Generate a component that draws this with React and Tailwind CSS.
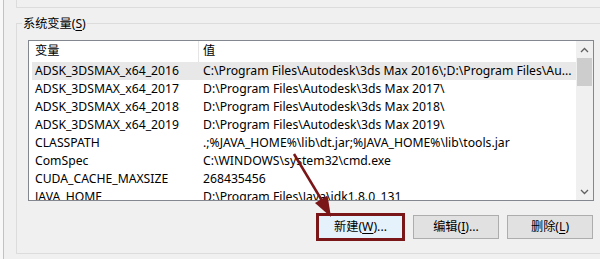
const rows = [
  ["ADSK_3DSMAX_x64_2016", "C:\\Program Files\\Autodesk\\3ds Max 2016\\;D:\\Program Files\\Au...", true],
  ["ADSK_3DSMAX_x64_2017", "D:\\Program Files\\Autodesk\\3ds Max 2017\\"],
  ["ADSK_3DSMAX_x64_2018", "D:\\Program Files\\Autodesk\\3ds Max 2018\\"],
  ["ADSK_3DSMAX_x64_2019", "D:\\Program Files\\Autodesk\\3ds Max 2019\\"],
  ["CLASSPATH", ".;%JAVA_HOME%\\lib\\dt.jar;%JAVA_HOME%\\lib\\tools.jar"],
  ["ComSpec", "C:\\WINDOWS\\system32\\cmd.exe"],
  ["CUDA_CACHE_MAXSIZE", "268435456"],
  ["JAVA_HOME", "D:\\Program Files\\Java\\jdk1.8.0_131"],
];

function Chevron({ up }) {
  return (
    <svg width="9" height="6" viewBox="0 0 9 6" className="block">
      <path
        d={up ? "M1 5 L4.5 1.5 L8 5" : "M1 1 L4.5 4.5 L8 1"}
        fill="none"
        stroke="#606060"
        strokeWidth="1.3"
      />
    </svg>
  );
}

export default function App() {
  return (
    <div className="relative flex h-[259px] w-[600px] overflow-hidden bg-[#f0f0f0] font-['Noto_Sans','Noto_Sans_CJK_SC',sans-serif] text-[12.2px] text-black">
      <div className="w-[3px] shrink-0 bg-[#f8f8f8]" />
      <div className="w-px shrink-0 bg-[#a8c8e6]" />
      <div className="flex flex-1 flex-col">
        <div className="ml-[12px] h-[8px] shrink-0 border-b border-l border-[#dcdcdc]" />
        <div className="-mr-[4px] ml-[12px] mt-[15px] h-[231px] shrink-0 border border-[#dcdcdc] pl-[11px]">
          <div className="-ml-[6px] -mt-[8px] w-fit bg-[#f0f0f0] px-px leading-[16px]">
            系统变量(<u className="underline-offset-2">S</u>)
          </div>
          <div className="mt-[8px] flex h-[161px] w-[566px] border border-[#828790] bg-white">
            <div className="flex min-w-0 flex-1 flex-col overflow-hidden">
              <div className="flex h-[21px] shrink-0 items-center">
                <div className="flex h-full w-[170px] shrink-0 items-center border-r border-[#e5e5e5] pl-[6px]">
                  变量
                </div>
                <div className="pl-[4px]">值</div>
              </div>
              {rows.map(([name, value, sel]) => (
                <div
                  key={name}
                  className={`ml-[3px] flex h-[18px] shrink-0 items-center whitespace-nowrap leading-[18px] ${sel ? "bg-[#e8e8e8]" : ""}`}
                >
                  <div className="w-[167px] shrink-0 pl-[3px]">{name}</div>
                  <div className="pl-[4px]">{value}</div>
                </div>
              ))}
            </div>
            <div className="flex w-[17px] shrink-0 flex-col bg-[#f0f0f0]">
              <div className="flex h-[17px] items-center justify-center">
                <Chevron up />
              </div>
              <div className="mx-px h-[28px] bg-[#cdcdcd]" />
              <div className="flex-1" />
              <div className="flex h-[17px] items-center justify-center">
                <Chevron />
              </div>
            </div>
          </div>
          <div className="mt-[12px] flex h-[28px] w-[566px] items-center justify-end gap-[8px] pr-px">
            <button className="flex h-[28px] w-[89px] items-center justify-center border-[3px] border-[#7a1518] bg-[#e5f1fb]">
              新建(<u className="underline-offset-2">W</u>)...
            </button>
            <button className="flex h-[24px] w-[86px] items-center justify-center border border-[#adadad] bg-[#e1e1e1]">
              编辑(<u className="underline-offset-2">I</u>)...
            </button>
            <button className="flex h-[24px] w-[86px] items-center justify-center border border-[#adadad] bg-[#e1e1e1]">
              删除(<u className="underline-offset-2">L</u>)
            </button>
          </div>
        </div>
      </div>
      <svg
        className="pointer-events-none absolute left-0 top-0"
        width="600"
        height="259"
        viewBox="0 0 600 259"
      >
        <line x1="294" y1="154" x2="324" y2="204" stroke="#7a1518" strokeWidth="2.5" />
        <polygon points="331,217 315,203 327.5,195.5" fill="#7a1518" />
      </svg>
    </div>
  );
}
